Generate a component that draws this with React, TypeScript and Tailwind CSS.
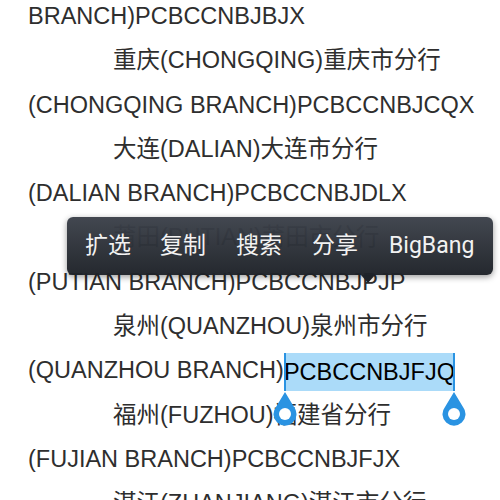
import React from 'react';

const lines: { text: string; indent?: boolean; selected?: boolean }[] = [
    { text: 'BRANCH)PCBCCNBJBJX' },
    { text: '重庆(CHONGQING)重庆市分行', indent: true },
    { text: '(CHONGQING BRANCH)PCBCCNBJCQX' },
    { text: '大连(DALIAN)大连市分行', indent: true },
    { text: '(DALIAN BRANCH)PCBCCNBJDLX' },
    { text: '莆田(PUTIAN)莆田市分行', indent: true },
    { text: '(PUTIAN BRANCH)PCBCCNBJPJP' },
    { text: '泉州(QUANZHOU)泉州市分行', indent: true },
    { text: '(QUANZHOU BRANCH)', selected: true },
    { text: '福州(FUZHOU)福建省分行', indent: true },
    { text: '(FUJIAN BRANCH)PCBCCNBJFJX' },
    { text: '湛江(ZHANJIANG)湛江市分行', indent: true },
];

function Handle() {
    return (
        <svg width="26" height="36" viewBox="0 0 26 36" className="absolute top-full -translate-x-1/2 left-0 mt-[1px]">
            <path d="M13 0 L22 15 A11.5 11.5 0 1 1 4 15 Z" fill="#2a93e2" />
            <circle cx="13" cy="22" r="6" fill="#ffffff" />
        </svg>
    );
}

export default function App() {
    return (
        <div className="relative w-[500px] h-[500px] overflow-hidden bg-white font-['Liberation_Sans','Noto_Sans_CJK_SC',sans-serif] text-[#2e2e2e]">
            <div className="-mt-[6px] pl-[28px]">
                {lines.map((l, i) => (
                    <div key={i} className={`h-[44.3px] leading-[44.3px] text-[23.5px] whitespace-nowrap ${l.indent ? 'pl-[85px]' : ''}`}>
                        {l.text}
                        {l.selected && (
                            <span className="relative inline-block bg-[#abdbf9] text-black leading-[38px] align-middle">
                                PCBCCNBJFJQ
                                <span className="absolute left-0 top-0 h-full w-[2px] bg-[#2a93e2]" />
                                <span className="absolute right-0 top-0 h-full w-[2px] bg-[#2a93e2]" />
                                <span className="absolute left-[1px] top-0 h-full"><Handle /></span>
                                <span className="absolute right-[1px] top-0 h-full"><Handle /></span>
                            </span>
                        )}
                    </div>
                ))}
            </div>

            {/* selection popup */}
            <div className="absolute left-[67px] top-[217px] w-[426px] h-[58px] rounded-[6px] bg-gradient-to-b from-[#3d424b]/[0.97] to-[#1e2228]/[0.97] shadow-[0_2px_6px_rgba(0,0,0,0.4)] flex items-center pl-[18px] text-[23px] text-[#f2f2f2] font-['Roboto','Noto_Sans_CJK_SC',sans-serif]">
                <span className="w-[75px]">扩选</span>
                <span className="w-[76px]">复制</span>
                <span className="w-[76px]">搜索</span>
                <span className="w-[77px]">分享</span>
                <span>BigBang</span>
                <div className="absolute left-[294px] top-full w-0 h-0 border-l-[7px] border-r-[7px] border-t-[8px] border-l-transparent border-r-transparent border-t-[#1e2228]" />
            </div>
        </div>
    );
}
